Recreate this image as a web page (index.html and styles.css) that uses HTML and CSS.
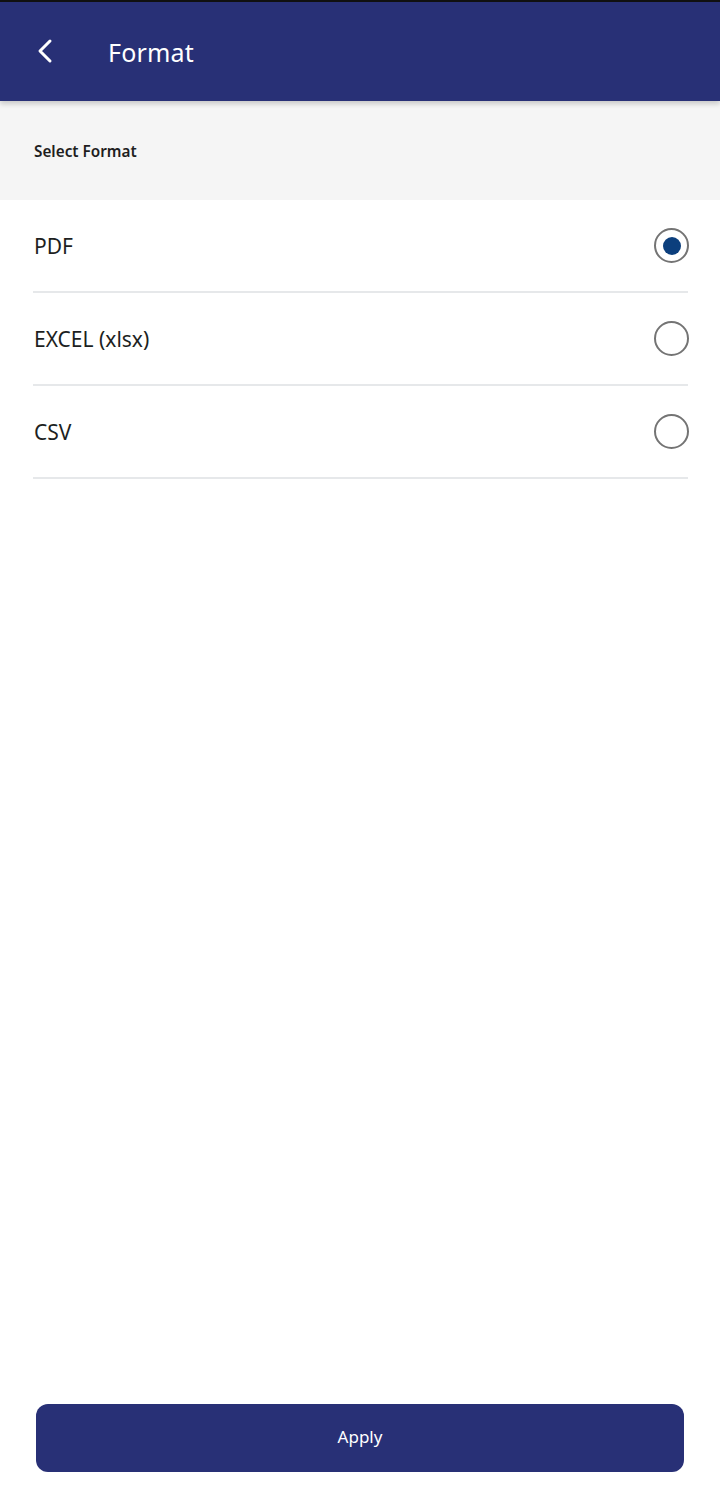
FILE: index.html
```html
<!DOCTYPE html>
<html>
<head>
<meta charset="utf-8">
<link rel="stylesheet" href="styles.css">
</head>
<body>
<div class="app">
  <div class="status"></div>
  <header class="topbar">
    <svg class="back" width="20" height="26" viewBox="0 0 20 26"><path d="M15 3 L5 13 L15 23" fill="none" stroke="#fff" stroke-width="3" stroke-linecap="round" stroke-linejoin="round"/></svg>
    <h1 class="title">Format</h1>
  </header>
  <div class="section">Select Format</div>
  <ul class="options">
    <li class="option"><span class="label">PDF</span><span class="radio checked"></span></li>
    <li class="option"><span class="label">EXCEL (xlsx)</span><span class="radio"></span></li>
    <li class="option"><span class="label">CSV</span><span class="radio"></span></li>
  </ul>
  <div class="spacer"></div>
  <div class="footer"><button class="apply">Apply</button></div>
</div>
</body>
</html>
```
FILE: styles.css
```css
* { box-sizing: border-box; }
html, body { margin: 0; padding: 0; }
body {
  font-family: "Noto Sans", "Open Sans", sans-serif;
  background: #ffffff;
  color: #1d1d1f;
}
.app {
  width: 720px;
  height: 1500px;
  display: flex;
  flex-direction: column;
}
.status { height: 2px; background: #111; }
.topbar {
  height: 99px;
  background: #283076;
  display: flex;
  align-items: center;
  padding-left: 35px;
  box-shadow: 0 3px 5px rgba(0,0,0,0.18);
  position: relative;
  z-index: 1;
}
.back { display: block; margin-top: -2px; }
.title {
  margin: 0 0 0 53px;
  color: #ffffff;
  font-size: 25px;
  font-weight: 400;
  letter-spacing: 0.2px;
}
.section {
  height: 99px;
  background: #f5f5f5;
  padding-left: 34px;
  display: flex;
  align-items: center;
  font-size: 15.3px;
  font-weight: 600;
  color: #1e1e1e;
  padding-top: 1px;
}
.options {
  list-style: none;
  margin: 0;
  padding: 0 32px 0 33px;
}
.option {
  height: 93px;
  display: flex;
  align-items: center;
  justify-content: space-between;
  border-bottom: 2px solid #e6e8ea;
  padding-left: 1px;
}
.label {
  font-size: 21px;
  color: #1d1f22;
  margin-top: 1px;
}
.radio {
  width: 35px;
  height: 35px;
  border: 2.5px solid #747474;
  border-radius: 50%;
  margin-right: -1px;
  display: flex;
  align-items: center;
  justify-content: center;
}
.radio.checked::after {
  content: "";
  width: 18px;
  height: 18px;
  border-radius: 50%;
  background: #0c3f7d;
}
.spacer { flex: 1; }
.footer {
  padding: 0 36px 28px 36px;
}
.apply {
  width: 100%;
  height: 68px;
  border: none;
  border-radius: 12px;
  background: #283076;
  color: #ffffff;
  font-family: "Noto Sans", "Open Sans", sans-serif;
  font-size: 17px;
  padding: 0 0 4px 0;
}
```
